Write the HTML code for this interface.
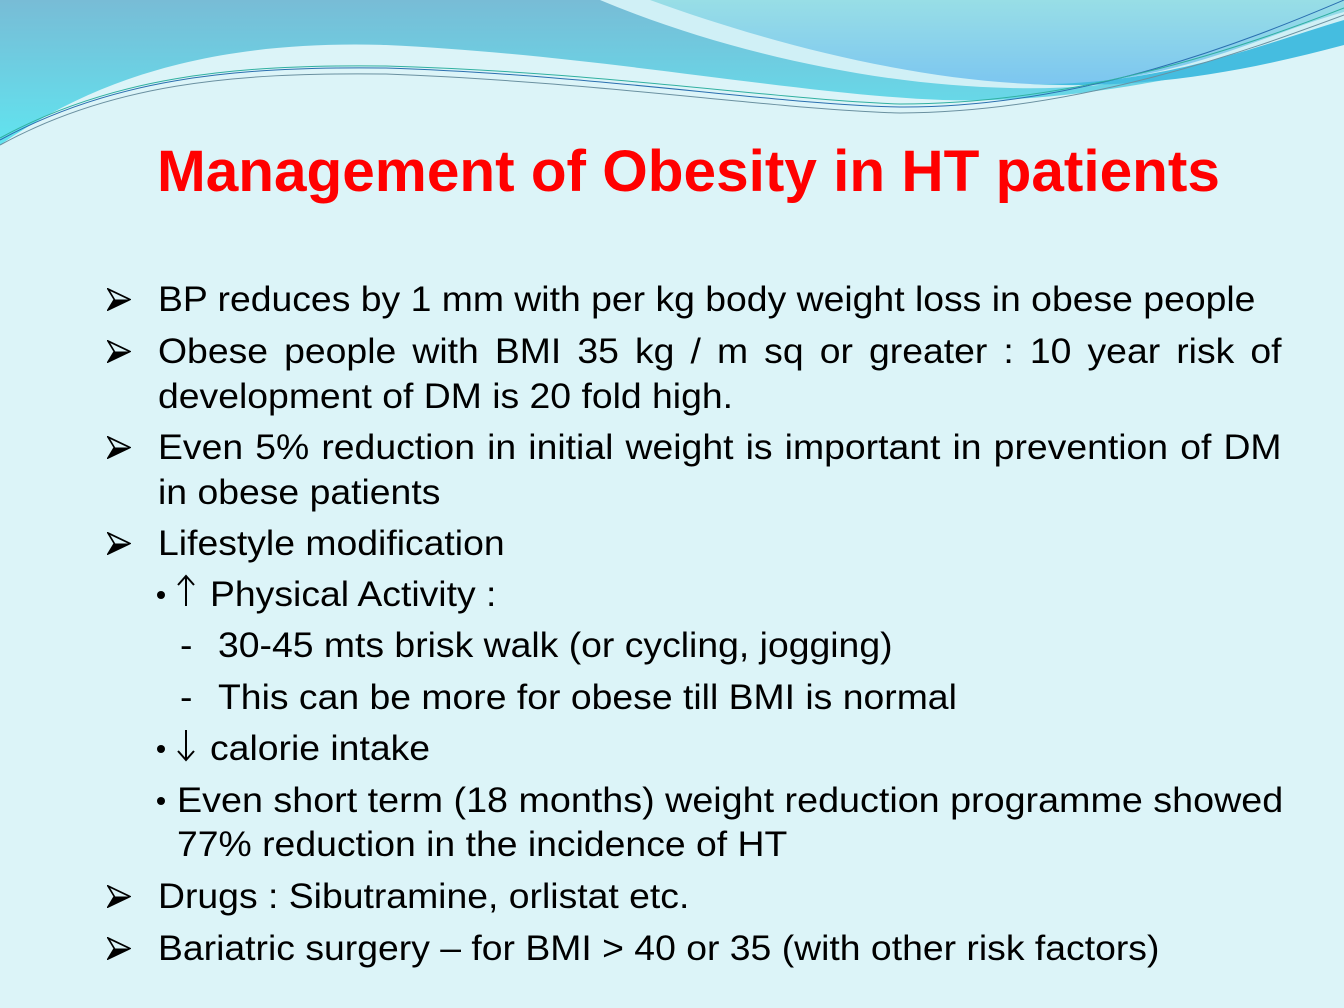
<!DOCTYPE html>
<html><head><style>
body{margin:0;width:1344px;height:1008px;overflow:hidden;background:#dcf4f8;position:relative;font-family:"Liberation Sans",sans-serif;}
.t{position:absolute;font-size:35px;line-height:35px;color:#000;white-space:nowrap;transform-origin:0 0;transform:scaleX(1.067);}
.j{text-align:justify;text-align-last:justify;width:1053px;}
.ar{position:absolute;left:107px;width:24px;height:23px;}
.bl{position:absolute;width:8px;height:8px;border-radius:50%;background:#000;}
</style></head><body>
<svg width="1344" height="160" style="position:absolute;left:0;top:0">
<defs>
<linearGradient id="g1" x1="0" y1="0" x2="0" y2="1"><stop offset="0" stop-color="#78bcd6"/><stop offset="1" stop-color="#5ee8f2"/></linearGradient>
<linearGradient id="g2" x1="0" y1="0" x2="0" y2="1"><stop offset="0" stop-color="#98dee6"/><stop offset="1" stop-color="#7cc6f0"/></linearGradient>
</defs>
<rect width="1344" height="160" fill="url(#g1)"/>
<path d="M0,145 C100,75 220,40 386,45 C600,55 800,95 943,100 C1100,105 1250,60 1344,40 V160 H0 Z" fill="#dcf4f8"/>
<path d="M600,0 C720,50 870,85 1010,88 C1160,92 1270,50 1344,35 V0 Z" fill="#d0f0f6"/>
<path d="M650,0 C760,40 900,78 1030,84 C1170,88 1260,35 1344,12 V0 Z" fill="url(#g2)"/>
<path d="M1030,84 C1160,86 1260,45 1344,20 V45 C1250,70 1150,90 1030,84 Z" fill="#45bde0"/>
<path d="M0,140 C110,80 230,66 386,68 C600,75 780,105 900,107 C1080,108 1250,40 1344,0" fill="none" stroke="#2a6fb0" stroke-width="1"/>
<path d="M0,145 C110,85 230,72 386,74 C600,82 780,110 900,113 C1080,112 1250,50 1344,15" fill="none" stroke="#6a90a0" stroke-width="1"/>
<path d="M0,138 C110,78 230,64 386,66 C600,72 780,100 900,104 C1080,104 1250,45 1344,8" fill="none" stroke="#30b0a0" stroke-width="1"/>
</svg>
<div style="position:absolute;left:157px;top:140px;font-size:58.5px;font-weight:bold;color:#ff0000;line-height:64px;white-space:nowrap;">Management of Obesity in HT patients</div>

<svg class="ar" style="top:288px" viewBox="0 0 23 22"><path d="M1,1 L22,11 L1,21 L7,11 Z" fill="none" stroke="#000" stroke-width="1.6"/><path d="M7,11 L22,11 L1,21 Z" fill="#000"/></svg>
<svg class="ar" style="top:340px" viewBox="0 0 23 22"><path d="M1,1 L22,11 L1,21 L7,11 Z" fill="none" stroke="#000" stroke-width="1.6"/><path d="M7,11 L22,11 L1,21 Z" fill="#000"/></svg>
<svg class="ar" style="top:436px" viewBox="0 0 23 22"><path d="M1,1 L22,11 L1,21 L7,11 Z" fill="none" stroke="#000" stroke-width="1.6"/><path d="M7,11 L22,11 L1,21 Z" fill="#000"/></svg>
<svg class="ar" style="top:532px" viewBox="0 0 23 22"><path d="M1,1 L22,11 L1,21 L7,11 Z" fill="none" stroke="#000" stroke-width="1.6"/><path d="M7,11 L22,11 L1,21 Z" fill="#000"/></svg>
<svg class="ar" style="top:885px" viewBox="0 0 23 22"><path d="M1,1 L22,11 L1,21 L7,11 Z" fill="none" stroke="#000" stroke-width="1.6"/><path d="M7,11 L22,11 L1,21 Z" fill="#000"/></svg>
<svg class="ar" style="top:937px" viewBox="0 0 23 22"><path d="M1,1 L22,11 L1,21 L7,11 Z" fill="none" stroke="#000" stroke-width="1.6"/><path d="M7,11 L22,11 L1,21 Z" fill="#000"/></svg>

<div class="t" style="left:158px;top:282px">BP reduces by 1 mm with per kg body weight loss in obese people</div>
<div class="t j" style="left:158px;top:334px">Obese people with BMI 35 kg / m sq or greater : 10 year risk of</div>
<div class="t" style="left:158px;top:379px">development of DM is 20 fold high.</div>
<div class="t j" style="left:158px;top:430px">Even 5% reduction in initial weight is important in prevention of DM</div>
<div class="t" style="left:158px;top:475px">in obese patients</div>
<div class="t" style="left:158px;top:526px">Lifestyle modification</div>

<div class="bl" style="left:157px;top:591px"></div>
<svg style="position:absolute;left:176px;top:574px" width="20" height="34" viewBox="0 0 20 34"><path d="M10,2 V32 M2,11 L10,2 L18,11" fill="none" stroke="#000" stroke-width="2"/></svg>
<div class="t" style="left:210px;top:577px">Physical Activity :</div>
<div class="t" style="left:180px;top:628px">-</div>
<div class="t" style="left:218px;top:628px">30-45 mts brisk walk (or cycling, jogging)</div>
<div class="t" style="left:180px;top:680px">-</div>
<div class="t" style="left:218px;top:680px">This can be more for obese till BMI is normal</div>
<div class="bl" style="left:157px;top:745px"></div>
<svg style="position:absolute;left:176px;top:728px" width="20" height="34" viewBox="0 0 20 34"><path d="M10,2 V32 M2,23 L10,32 L18,23" fill="none" stroke="#000" stroke-width="2"/></svg>
<div class="t" style="left:210px;top:731px">calorie intake</div>
<div class="bl" style="left:157px;top:797px"></div>
<div class="t" style="left:177px;top:783px;transform:scaleX(1.077)">Even short term (18 months) weight reduction programme showed</div>
<div class="t" style="left:177px;top:827px">77% reduction in the incidence of HT</div>
<div class="t" style="left:158px;top:879px">Drugs : Sibutramine, orlistat etc.</div>
<div class="t" style="left:158px;top:931px">Bariatric surgery – for BMI &gt; 40 or 35 (with other risk factors)</div>
</body></html>
